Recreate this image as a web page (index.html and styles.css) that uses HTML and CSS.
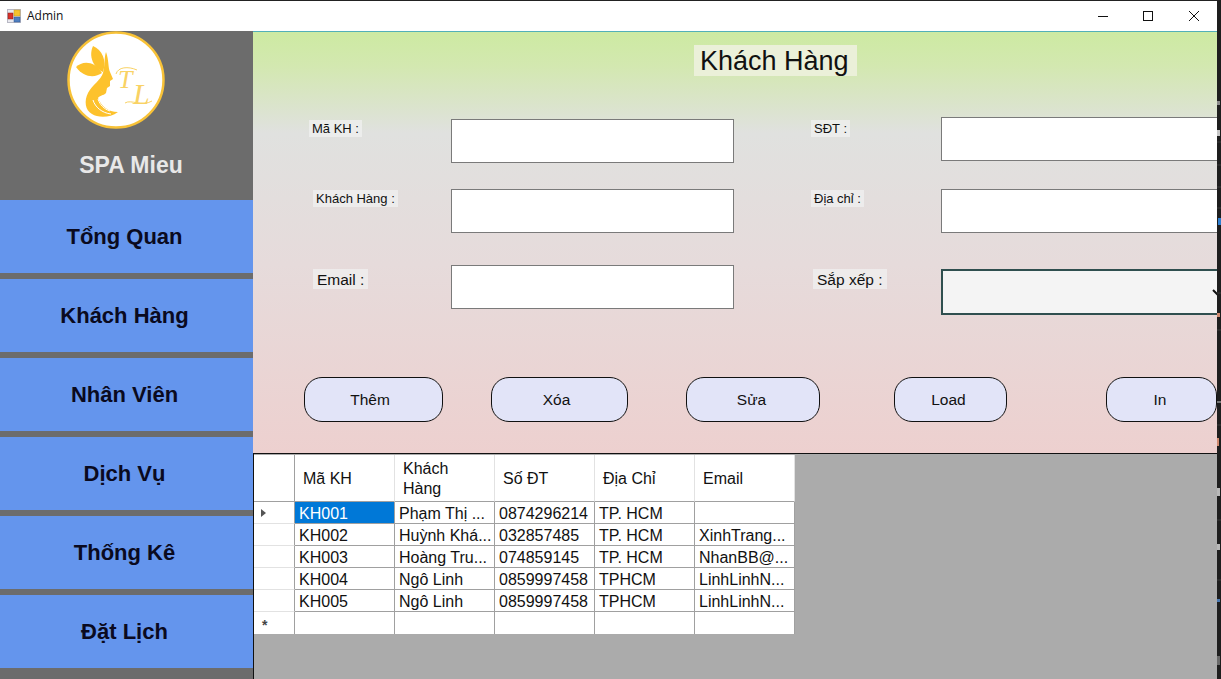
FILE: index.html
```html
<!DOCTYPE html>
<html lang="en">
<head>
    <meta charset="UTF-8">
    <title>Admin</title>
    <link rel="stylesheet" href="styles.css">
</head>
<body>
<div class="screen">
    <div class="window">

        <!-- Title bar -->
        <div class="titlebar">
            <svg class="app-icon" width="14" height="14" viewBox="0 0 14 14">
                <rect x="0.5" y="0.5" width="13" height="13" fill="#e8e8ee" stroke="#b8b8c4"/>
                <rect x="7" y="1" width="6" height="6" fill="#f5c22e" stroke="#c99a1a" stroke-width="0.5"/>
                <rect x="1" y="4" width="5" height="6" fill="#d8322a" stroke="#8c1c18" stroke-width="0.5"/>
                <rect x="7" y="8" width="6" height="5" fill="#4f7fc0" stroke="#2e5590" stroke-width="0.5"/>
            </svg>
            <span class="app-name">Admin</span>
            <div class="win-controls">
                <svg width="10" height="10" viewBox="0 0 10 10"><path d="M0 5.5H10" stroke="#111" fill="none"/></svg>
                <svg width="10" height="10" viewBox="0 0 10 10"><rect x="0.5" y="0.5" width="9" height="9" stroke="#111" fill="none"/></svg>
                <svg class="win-close" width="10" height="10" viewBox="0 0 10 10"><path d="M0 0L10 10M10 0L0 10" stroke="#111" fill="none"/></svg>
            </div>
        </div>

        <div class="content">

            <!-- Sidebar -->
            <div class="sidebar">
                <div class="brand">
                    <svg class="logo" width="100" height="100" viewBox="66 30 100 100">
                        <circle cx="116" cy="80" r="47.5" fill="#fff" stroke="#f8c237" stroke-width="2.5"/>
                        <path d="M76 67C82 61 94 60 102 73C95 78 84 78 76 67Z" fill="#fdc22c"/>
                        <path d="M93 46C102 50 107 60 103 72C94 68 88 57 93 46Z" fill="#fdc22c"/>
                        <path d="M106 52C109 60 108 68 110 72L113 79L110 81L110 86L107 88L106 93C103 96 100 95 98 98C101 106 108 112 118 112C110 118 98 118 92 114C85 110 84 101 88 93C92 85 101 80 103 73C105 66 104 58 106 52Z" fill="#fdc22c"/>
                        <path d="M93 100C95 107 102 113 111 114M98 99C100 105 104 109 110 111" stroke="#fff" fill="none"/>
                        <path d="M116 74C118 67 128 66 137 70M125 103C131 99 142 107 152 101" stroke="#f9d264" fill="none"/>
                        <text class="logo-t" x="118" y="88">T</text>
                        <text class="logo-l" x="133" y="104">L</text>
                    </svg>
                    <div class="brand-name">SPA Mieu</div>
                </div>
                <div class="nav-btn">Tổng Quan</div>
                <div class="nav-btn">Khách Hàng</div>
                <div class="nav-btn">Nhân Viên</div>
                <div class="nav-btn">Dịch Vụ</div>
                <div class="nav-btn">Thống Kê</div>
                <div class="nav-btn">Đặt Lịch</div>
            </div>

            <div class="main">

                <!-- Customer form -->
                <div class="form-panel">
                    <div class="title-row"><span class="page-title">Khách Hàng</span></div>

                    <div class="fields">
                        <div class="col col-left">
                            <div class="field">
                                <span class="lbl lbl-ma">Mã KH :</span>
                                <div class="input"></div>
                            </div>
                            <div class="field">
                                <span class="lbl lbl-khach">Khách Hàng :</span>
                                <div class="input"></div>
                            </div>
                            <div class="field">
                                <span class="lbl lbl-big lbl-email">Email :</span>
                                <div class="input"></div>
                            </div>
                        </div>
                        <div class="col col-right">
                            <div class="field">
                                <span class="lbl lbl-sdt">SĐT :</span>
                                <div class="input"></div>
                            </div>
                            <div class="field">
                                <span class="lbl lbl-diachi">Địa chỉ :</span>
                                <div class="input"></div>
                            </div>
                            <div class="field">
                                <span class="lbl lbl-big lbl-sapxep">Sắp xếp :</span>
                                <div class="select">
                                    <svg class="chevron" width="12" height="8" viewBox="0 0 12 8"><path d="M1 1L6 6L11 1" stroke="#111" stroke-width="2" fill="none"/></svg>
                                </div>
                            </div>
                        </div>
                    </div>

                    <div class="actions">
                        <div class="btn btn-them">Thêm</div>
                        <div class="btn btn-xoa">Xóa</div>
                        <div class="btn btn-sua">Sửa</div>
                        <div class="btn btn-load">Load</div>
                        <div class="btn btn-in">In</div>
                    </div>
                </div>

                <!-- Customer grid -->
                <div class="grid-area">
                    <table class="grid">
                        <thead>
                            <tr>
                                <th class="row-head"></th>
                                <th>Mã KH</th>
                                <th>Khách Hàng</th>
                                <th>Số ĐT</th>
                                <th>Địa Chỉ</th>
                                <th>Email</th>
                            </tr>
                        </thead>
                        <tbody>
                            <tr>
                                <td class="row-head"><span class="row-arrow"></span></td>
                                <td class="selected">KH001</td>
                                <td>Phạm Thị ...</td>
                                <td>0874296214</td>
                                <td>TP. HCM</td>
                                <td></td>
                            </tr>
                            <tr>
                                <td class="row-head"></td>
                                <td>KH002</td>
                                <td>Huỳnh Khá...</td>
                                <td>032857485</td>
                                <td>TP. HCM</td>
                                <td>XinhTrang...</td>
                            </tr>
                            <tr>
                                <td class="row-head"></td>
                                <td>KH003</td>
                                <td>Hoàng Tru...</td>
                                <td>074859145</td>
                                <td>TP. HCM</td>
                                <td>NhanBB@...</td>
                            </tr>
                            <tr>
                                <td class="row-head"></td>
                                <td>KH004</td>
                                <td>Ngô Linh</td>
                                <td>0859997458</td>
                                <td>TPHCM</td>
                                <td>LinhLinhN...</td>
                            </tr>
                            <tr>
                                <td class="row-head"></td>
                                <td>KH005</td>
                                <td>Ngô Linh</td>
                                <td>0859997458</td>
                                <td>TPHCM</td>
                                <td>LinhLinhN...</td>
                            </tr>
                            <tr>
                                <td class="row-head new-row">*</td>
                                <td></td>
                                <td></td>
                                <td></td>
                                <td></td>
                                <td></td>
                            </tr>
                        </tbody>
                    </table>
                </div>
            </div>
        </div>
    </div>

    <!-- Sliver of the editor behind the window -->
    <svg class="behind" width="4" height="679" viewBox="0 0 4 679">
        <rect width="4" height="679" fill="#1e1e1e"/>
        <path d="M0 142H4M0 165H4M0 187H4M0 208H4M0 293H4M0 330H4M0 425H4M0 520H4M0 580H4" stroke="#3a3a3a"/>
        <rect x="0" y="101" width="3" height="4" fill="#8a8a8a"/>
        <rect x="0" y="130" width="3" height="6" fill="#c8c8c8"/>
        <rect x="1" y="218" width="3" height="7" fill="#2f7fd0"/>
        <rect x="0" y="313" width="3" height="4" fill="#d08a70"/>
        <rect x="0" y="401" width="4" height="2" fill="#777"/>
        <rect x="0" y="438" width="2" height="8" fill="#d08a70"/>
        <rect x="0" y="488" width="3" height="8" fill="#b8b8b8"/>
        <rect x="0" y="544" width="3" height="6" fill="#b8b8b8"/>
        <rect x="0" y="599" width="3" height="3" fill="#4a78b0"/>
        <rect x="0" y="656" width="3" height="9" fill="#6a6a6a"/>
    </svg>
</div>
</body>
</html>
```

FILE: styles.css
```css
/* Page */
body {
    margin: 0;
    font-family: "Liberation Sans", Arial, sans-serif;
    color: #111;
}

.screen {
    display: flex;
    width: 1221px;
    height: 679px;
    overflow: hidden;
    background: #1e1e1e;
}

.window {
    display: flex;
    flex-direction: column;
    width: 1217px;
    height: 679px;
    flex: none;
}

.behind {
    display: block;
    flex: none;
}

/* Title bar */
.titlebar {
    display: flex;
    align-items: center;
    flex: none;
    height: 30px;
    border-top: 1px solid #222;
    background: #fff;
    padding-left: 7px;
    padding-right: 18px;
}

.app-icon {
    display: block;
}

.app-name {
    margin-left: 6px;
    margin-bottom: 2px;
    font-family: "Open Sans", "Noto Sans", sans-serif;
    font-size: 12px;
}

.win-controls {
    display: flex;
    gap: 35px;
    margin-left: auto;
}

.win-close {
    margin-left: 1px;
}

.content {
    display: flex;
    flex: 1;
    min-height: 0;
}

/* Sidebar */
.sidebar {
    width: 253px;
    flex: none;
    background: #6c6c6c;
}

.brand {
    height: 170px;
}

.logo {
    display: block;
    margin-left: 66px;
    margin-top: -1px;
}

.logo-t {
    font-family: "Liberation Serif", serif;
    font-style: italic;
    font-size: 26px;
    fill: #f9d264;
}

.logo-l {
    font-family: "Liberation Serif", serif;
    font-style: italic;
    font-size: 30px;
    fill: #f9d264;
}

.brand-name {
    margin-top: 22px;
    padding-left: 9px;
    text-align: center;
    font-size: 23px;
    font-weight: bold;
    line-height: 26px;
    color: #e8e8e8;
}

.nav-btn {
    display: flex;
    align-items: center;
    justify-content: center;
    height: 73px;
    margin-bottom: 6px;
    padding-right: 4px;
    box-sizing: border-box;
    background: #6495ed;
    color: #0a0a20;
    font-size: 22px;
    font-weight: bold;
}

/* Main area */
.main {
    display: flex;
    flex-direction: column;
    flex: 1;
    min-width: 0;
}

.form-panel {
    flex: none;
    height: 423px;
    box-sizing: border-box;
    border-top: 1px solid #52b0b8;
    border-bottom: 1px solid #111;
    overflow: hidden;
    background: linear-gradient(180deg, #cdeaa2 0%, #d3e8b0 8%, #e0e1df 24%, #e6dbdb 55%, #edd0cf 100%);
}

.title-row {
    padding-top: 13px;
    padding-left: 441px;
    height: 31px;
}

.page-title {
    display: inline-block;
    padding: 2px 8px 0 6px;
    font-size: 27px;
    line-height: 29px;
    background: #ebf0d9;
}

/* Form fields */
.fields {
    display: flex;
    height: 239px;
}

.col {
    flex: none;
}

.col-left {
    width: 558px;
    padding-top: 43px;
    padding-left: 56px;
    box-sizing: border-box;
}

.col-right {
    padding-top: 41px;
}

.field {
    display: grid;
    grid-template-columns: 142px 283px;
    align-items: start;
}

.col-left .field:nth-child(2) {
    margin-top: 26px;
}

.col-left .field:nth-child(3) {
    margin-top: 32px;
}

.col-right .field {
    grid-template-columns: 130px 300px;
}

.col-right .field:nth-child(2) {
    margin-top: 28px;
}

.col-right .field:nth-child(3) {
    margin-top: 36px;
}

.lbl {
    justify-self: start;
    padding: 1px 3px 0;
    font-size: 13px;
    line-height: 16px;
    background: rgba(240, 240, 240, 0.75);
}

.lbl-big {
    font-size: 15.5px;
    line-height: 19px;
    padding: 1px 4px 0;
}

.lbl-ma { margin-top: 1px; }
.lbl-khach { margin-top: 1px; margin-left: 4px; }
.lbl-email { margin-top: 4px; margin-left: 4px; }
.lbl-sdt { margin-top: 3px; }
.lbl-diachi { margin-top: 1px; }
.lbl-sapxep { margin-left: 2px; }

.input {
    height: 44px;
    box-sizing: border-box;
    border: 1px solid #7a7a7a;
    background: #fff;
}

.select {
    position: relative;
    height: 46px;
    box-sizing: border-box;
    border: 2px solid #2f4f4f;
    background: #f4f4f4;
}

.chevron {
    position: absolute;
    left: 269px;
    top: 18px;
}

/* Action buttons */
.actions {
    display: flex;
    margin-top: 62px;
}

.btn {
    display: flex;
    align-items: center;
    justify-content: center;
    flex: none;
    height: 45px;
    box-sizing: border-box;
    border: 1px solid #111;
    border-radius: 18px;
    background: #e2e4f8;
    font-size: 15.5px;
}

.btn-them { width: 139px; margin-left: 51px; padding-right: 7px; }
.btn-xoa { width: 137px; margin-left: 48px; padding-right: 6px; }
.btn-sua { width: 134px; margin-left: 58px; padding-right: 3px; }
.btn-load { width: 113px; margin-left: 74px; padding-right: 4px; }
.btn-in { width: 111px; margin-left: 99px; padding-right: 3px; }

/* Data grid */
.grid-area {
    flex: 1;
    border-left: 1px solid #111;
    padding-top: 1px;
    background: #ababab;
}

.grid {
    border-collapse: separate;
    border-spacing: 0;
    table-layout: fixed;
    width: 541px;
    background: #fff;
    font-size: 16px;
}

.grid th {
    width: 100px;
    height: 47px;
    box-sizing: border-box;
    padding: 2px 8px 0;
    font-weight: normal;
    text-align: left;
    line-height: 20px;
    border-right: 1px solid #e2e2e2;
    border-bottom: 1px solid #a0a0a0;
}

.grid td {
    height: 22px;
    box-sizing: border-box;
    padding: 2px 4px 0;
    line-height: 19px;
    white-space: nowrap;
    overflow: hidden;
    border-right: 1px solid #a0a0a0;
    border-bottom: 1px solid #a0a0a0;
}

.grid tr:last-child td {
    border-bottom: none;
}

.grid .row-head {
    width: 41px;
    padding: 0;
    border-right: 1px solid #a0a0a0;
}

.grid td.row-head {
    border-bottom-color: #e2e2e2;
}

.grid td.selected {
    background: #0078d7;
    color: #fff;
}

.row-arrow {
    display: block;
    width: 0;
    height: 0;
    margin-left: 7px;
    border-top: 4px solid transparent;
    border-bottom: 4px solid transparent;
    border-left: 5px solid #555;
}

.grid td.new-row {
    padding-left: 8px;
    padding-top: 3px;
    font-size: 14px;
    line-height: 18px;
    font-weight: bold;
    color: #444;
}
```
